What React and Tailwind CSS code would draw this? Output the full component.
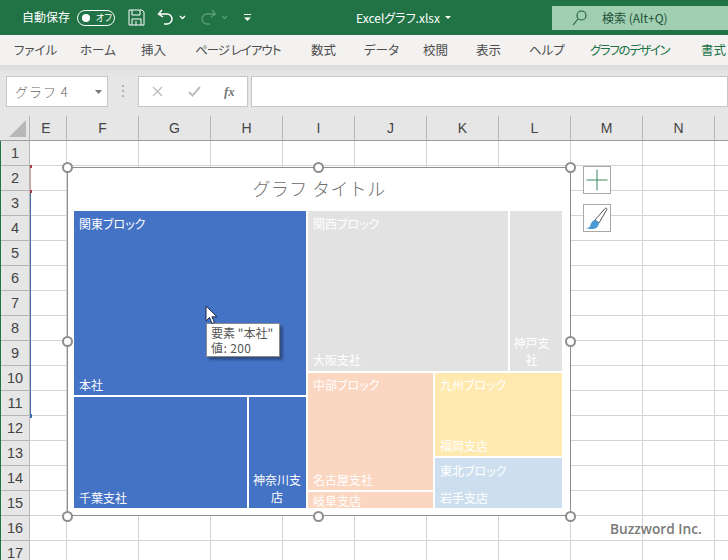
import { useState } from "react";

const font = "[font-family:'Noto_Sans_CJK_JP','Noto_Sans',sans-serif]";

const tabs = [
  { label: "ファイル", w: "w-[66px]" },
  { label: "ホーム", w: "w-[61px]" },
  { label: "挿入", w: "w-[54px]" },
  { label: "ページ レイアウト", w: "w-[116px]", extra: "tracking-[-1px]" },
  { label: "数式", w: "w-[53px]" },
  { label: "データ", w: "w-[59px]" },
  { label: "校閲", w: "w-[53px]" },
  { label: "表示", w: "w-[53px]" },
  { label: "ヘルプ", w: "w-[61px]" },
  { label: "グラフのデザイン", w: "w-[111px]", extra: "tracking-[-1.4px] text-[#217346]" },
  { label: "書式", w: "w-[40px]", extra: "text-[#217346]" },
];

const columns = [
  { name: "E", w: "w-[37px]" },
  { name: "F", w: "w-[72px]" },
  { name: "G", w: "w-[72px]" },
  { name: "H", w: "w-[72px]" },
  { name: "I", w: "w-[72px]" },
  { name: "J", w: "w-[72px]" },
  { name: "K", w: "w-[72px]" },
  { name: "L", w: "w-[72px]" },
  { name: "M", w: "w-[72px]" },
  { name: "N", w: "w-[72px]" },
  { name: "", w: "w-[14px]" },
];

const rows = Array.from({ length: 17 }, (_, i) => i + 1);

const handles = [
  "left-[-6px] top-[-6px]",
  "left-[245px] top-[-6px]",
  "left-[497px] top-[-6px]",
  "left-[-6px] top-[168px]",
  "left-[497px] top-[168px]",
  "left-[-6px] top-[343px]",
  "left-[245px] top-[343px]",
  "left-[497px] top-[343px]",
];

const Tile = ({ className, top, topClass = "px-[5.5px] pt-[4px]", bottom, bottomClass = "px-[5.5px] pb-[2px]" }) => (
  <div className={`flex flex-col justify-between overflow-hidden text-white text-[12px] leading-[17px] ${className}`}>
    <div className={topClass}>{top}</div>
    <div className={bottomClass}>{bottom}</div>
  </div>
);

const Chart = () => (
  <div className="absolute left-[67px] top-[167px] h-[349px] w-[504px] border-[1.5px] border-[#8e8e8e] bg-white">
    <div className="h-[43px] pt-[8px] text-center text-[18px] font-light leading-[25px] tracking-[0.4px] text-[#6f6f6f] [font-feature-settings:normal]">
      グラフ タイトル
    </div>
    <div className="ml-[5.500px] flex h-[297px] w-[488px] gap-[2px]">
      <div className="flex w-[232px] flex-col gap-[2px]">
        <Tile className="h-[184px] bg-[#4472c4]" top="関東ブロック" bottom="本社" />
        <div className="flex h-[111px] gap-[2px]">
          <Tile className="w-[173px] bg-[#4472c4]" bottom="千葉支社" />
          <Tile
            className="w-[57px] bg-[#4472c4]"
            bottom="神奈川支店"
            bottomClass="px-[4px] pb-[3px] text-center"
          />
        </div>
      </div>
      <div className="flex w-[254px] flex-col gap-[2px]">
        <div className="flex h-[160px] gap-[2px]">
          <Tile
            className="w-[200px] bg-[#e2e2e2]"
            top="関西ブロック"
            bottom="大阪支社"
            bottomClass="px-[5.5px] pb-[3px]"
          />
          <Tile
            className="w-[52px] bg-[#e2e2e2]"
            bottom="神戸支社"
            bottomClass="pl-[3px] pr-[11px] pb-[3px] text-center"
          />
        </div>
        <div className="flex h-[135px] gap-[2px]">
          <div className="flex w-[125px] flex-col gap-[2px]">
            <Tile
              className="h-[117px] bg-[#fbd6c0]"
              top="中部ブロック"
              topClass="px-[5.5px] pt-[3px]"
              bottom="名古屋支社"
            />
            <div className="h-[16px] bg-[#fbd6c0] px-[5.500px] text-[12px] leading-[17px] text-white">岐阜支店</div>
          </div>
          <div className="flex w-[127px] flex-col gap-[2px]">
            <Tile
              className="h-[83px] bg-[#ffe9af]"
              top="九州ブロック"
              topClass="px-[5.5px] pt-[3px]"
              bottom="福岡支店"
            />
            <Tile className="h-[50px] bg-[#cddfef]" top="東北ブロック" bottom="岩手支店" />
          </div>
        </div>
      </div>
    </div>
    {handles.map((pos) => (
      <div
        key={pos}
        className={`absolute h-[11px] w-[11px] rounded-full border-2 border-[#8e8e8e] bg-white ${pos}`}
      />
    ))}
  </div>
);

const App = () => {
  const [name] = useState("グラフ 4");

  return (
    <div className={`relative h-[560px] w-[728px] overflow-hidden bg-white ${font} [font-feature-settings:'palt']`}>
      {/* title bar */}
      <div className="flex h-[35px] items-center bg-[#217346] text-white">
        <span className="ml-[22px] mb-[1px] text-[12px]">自動保存</span>
        <div className="ml-[7px] flex h-[16px] w-[38px] items-center rounded-full border border-white pl-[4px]">
          <div className="h-[8px] w-[8px] rounded-full bg-white" />
          <span className="ml-[6px] text-[9px] leading-none">オフ</span>
        </div>
        <svg className="ml-[13px]" width="17" height="17" viewBox="0 0 17 17" fill="none" stroke="#fff" strokeWidth="1">
          <path d="M1 1h13l2 2v13H1z" />
          <path d="M4 1v5h8V1M4 16v-6h9v6M8 12v4" />
        </svg>
        <svg className="ml-[12px]" width="18" height="17" viewBox="0 0 18 17" fill="none" stroke="#fff" strokeWidth="1.500">
          <path d="M5 1 1.500 5 6 8M2 5h8a5 5 0 0 1 0 10H7" />
        </svg>
        <svg className="ml-[4px]" width="7" height="5" viewBox="0 0 7 5" fill="none" stroke="#fff" strokeWidth="1.300">
          <path d="m1 1 2.500 2.500L6 1" />
        </svg>
        <svg className="ml-[13px]" width="18" height="17" viewBox="0 0 18 17" fill="none" stroke="#5c9a7a" strokeWidth="1.300">
          <path d="M13 1l3.500 4L12 8M16 5H8a5 5 0 0 0 0 10h3" />
        </svg>
        <svg className="ml-[4px]" width="7" height="5" viewBox="0 0 7 5" fill="none" stroke="#5c9a7a" strokeWidth="1.200">
          <path d="m1 1 2.500 2.500L6 1" />
        </svg>
        <svg className="ml-[15px]" width="9" height="9" viewBox="0 0 9 9" fill="none" stroke="#fff">
          <path d="M1 1.500h7" />
          <path d="M1 4.500 4.500 8 8 4.500z" fill="#fff" stroke="none" />
        </svg>
        <span className="ml-[104px] w-[90px] text-[12px]">Excelグラフ.xlsx</span>
        <svg className="ml-[-1px]" width="6" height="3" viewBox="0 0 6 3">
          <path d="M0 0h6L3 3z" fill="#fff" />
        </svg>
        <div className="ml-[101px] mt-[1px] flex h-[24px] flex-1 items-center bg-[#9fcfb0] text-[#1f4f38]">
          <svg className="ml-[20px]" width="15" height="16" viewBox="0 0 15 16" fill="none" stroke="#1f5a3e" strokeWidth="1.100">
            <circle cx="9.500" cy="5.500" r="4.500" />
            <path d="M6 9 1 15" />
          </svg>
          <span className="ml-[15px] text-[12px]">検索 (Alt+Q)</span>
        </div>
      </div>

      {/* ribbon tabs */}
      <div className="flex h-[30px] items-center whitespace-nowrap bg-[#f3f2f1] pl-[14px] text-[12.5px] text-[#4d4d4d]">
        {tabs.map((t) => (
          <div key={t.label} className={`${t.w} shrink-0 ${t.extra || ""}`}>
            {t.label}
          </div>
        ))}
      </div>

      {/* formula bar */}
      <div className="flex h-[51px] items-start bg-gradient-to-b from-[#dcdcdc] from-0% to-[#e6e6e6] to-20% pt-[11px]">
        <div className="ml-[6px] flex h-[31px] w-[102px] items-center justify-between border border-[#c6c6c6] bg-white pl-[8px] pr-[5px] text-[13px] text-[#666]">
          <span className="font-light tracking-[1px] [font-feature-settings:normal]">{name}</span>
          <svg width="7" height="4" viewBox="0 0 7 4">
            <path d="M0 0h7L3.500 4z" fill="#777" />
          </svg>
        </div>
        <div className="ml-[14px] mt-[9px] flex h-[12px] w-[3px] flex-col justify-between">
          <div className="h-[2px] w-[2px] bg-[#b0b0b0]" />
          <div className="h-[2px] w-[2px] bg-[#b0b0b0]" />
          <div className="h-[2px] w-[2px] bg-[#b0b0b0]" />
        </div>
        <div className="ml-[13px] flex h-[31px] w-[110px] items-center border border-[#c6c6c6] bg-white">
          <svg className="ml-[13px]" width="11" height="11" viewBox="0 0 11 11" stroke="#bdbdbd" strokeWidth="1.400">
            <path d="m1 1 9 9M10 1l-9 9" />
          </svg>
          <svg className="ml-[25px]" width="13" height="11" viewBox="0 0 13 11" fill="none" stroke="#bdbdbd" strokeWidth="2">
            <path d="m1 6 3.500 3.500L12 1" />
          </svg>
          <span className="ml-[23px] font-['Liberation_Serif',serif] text-[13px] font-bold italic text-[#777]">fx</span>
        </div>
        <div className="ml-[3px] h-[31px] flex-1 border border-[#c6c6c6] bg-white" />
      </div>

      {/* column headers */}
      <div className="flex h-[25px] border-b border-[#9e9e9e] bg-[#e6e6e6] font-['Liberation_Sans',sans-serif] text-[14px] text-[#444]">
        <div className="relative w-[30px] shrink-0 border-r border-[#b5b5b5]">
          <svg className="absolute bottom-[3px] right-[3px]" width="17" height="17" viewBox="0 0 17 17">
            <path d="M17 0v17H0z" fill="#b8b8b8" />
          </svg>
        </div>
        {columns.map((c, i) => (
          <div
            key={i}
            className={`${c.w} flex shrink-0 items-center justify-center border-r border-[#b5b5b5] pt-[1px] ${
              c.name === "E" ? "pr-[4px]" : ""
            }`}
          >
            {c.name}
          </div>
        ))}
      </div>

      {/* sheet */}
      <div className="flex font-['Liberation_Sans',sans-serif]">
        <div className="w-[30px] shrink-0 border-l border-l-[#217346] bg-[#e6e6e6] text-[14.5px] text-[#444]">
          {rows.map((r) => (
            <div key={r} className="flex h-[25px] items-center justify-center border-b border-r border-[#b5b5b5] pt-[2px]">
              {r}
            </div>
          ))}
        </div>
        <div className="flex-1">
          {rows.map((r) => (
            <div key={r} className="flex h-[25px]">
              {columns.map((c, i) => (
                <div key={i} className={`${c.w} shrink-0 border-b border-r border-[#d4d4d4]`} />
              ))}
            </div>
          ))}
        </div>
      </div>

      {/* row markers of the chart data */}
      <div className="absolute left-[30px] top-[165px] h-[27px] w-[1px] bg-[#d9a0a0]" />
      <div className="absolute left-[30px] top-[165px] h-[3px] w-[2px] bg-[#b03a48]" />
      <div className="absolute left-[30px] top-[190px] h-[3px] w-[2px] bg-[#b03a48]" />
      <div className="absolute left-[30px] top-[193px] h-[222px] w-[1px] bg-[#4472a4]" />
      <div className="absolute left-[30px] top-[414px] h-[4px] w-[2px] bg-[#3c6eb4]" />

      <Chart />

      {/* chart side buttons */}
      <div className="absolute left-[583px] top-[166px] flex h-[28px] w-[28px] items-center justify-center border border-[#a8a8a8] bg-white">
        <svg width="22" height="22" viewBox="0 0 22 22" stroke="#3b8a5e" strokeWidth="1">
          <path d="M0.500 11h21M11 0.500v21" />
        </svg>
      </div>
      <div className="absolute left-[583px] top-[204px] flex h-[28px] w-[28px] items-center justify-center border border-[#a8a8a8] bg-white">
        <svg width="24" height="24" viewBox="0 0 24 24">
          <path d="M10 14 20 2.500c1-.8 2.200-.2 1.800 1L14 17z" fill="#fff" stroke="#555" strokeWidth="1" />
          <path d="M1 22c3 0 4-1 4.500-3 .6-2.500 2.500-5 4.500-5l4 3c0 3-3 6-6 6-3 .2-5-.2-7-1z" fill="#4a9ad8" />
        </svg>
      </div>

      {/* tooltip */}
      <div className="absolute left-[206px] top-[323px] h-[34px] w-[74px] border border-[#8a8a8a] bg-white pl-[4px] pt-[1px] text-[12px] leading-[15px] text-[#555] shadow-[3px_3px_2px_rgba(30,50,90,0.55)]">
        <div>要素 "本社"</div>
        <div className="tracking-[0.4px]">値: 200</div>
      </div>

      {/* mouse pointer */}
      <svg className="absolute left-[205px] top-[305px]" width="13" height="20" viewBox="0 0 13 20">
        <path d="M1 1v15l3.500-3.500L7 18.500l2.500-1L7 11.800h5z" fill="#fff" stroke="#1b2a4a" strokeWidth="1" />
      </svg>

      <div className="absolute left-[610px] top-[519px] font-['Open_Sans',sans-serif] text-[13.7px] font-semibold text-[#7a7a7a]">
        Buzzword Inc.
      </div>
    </div>
  );
};

export default App;
